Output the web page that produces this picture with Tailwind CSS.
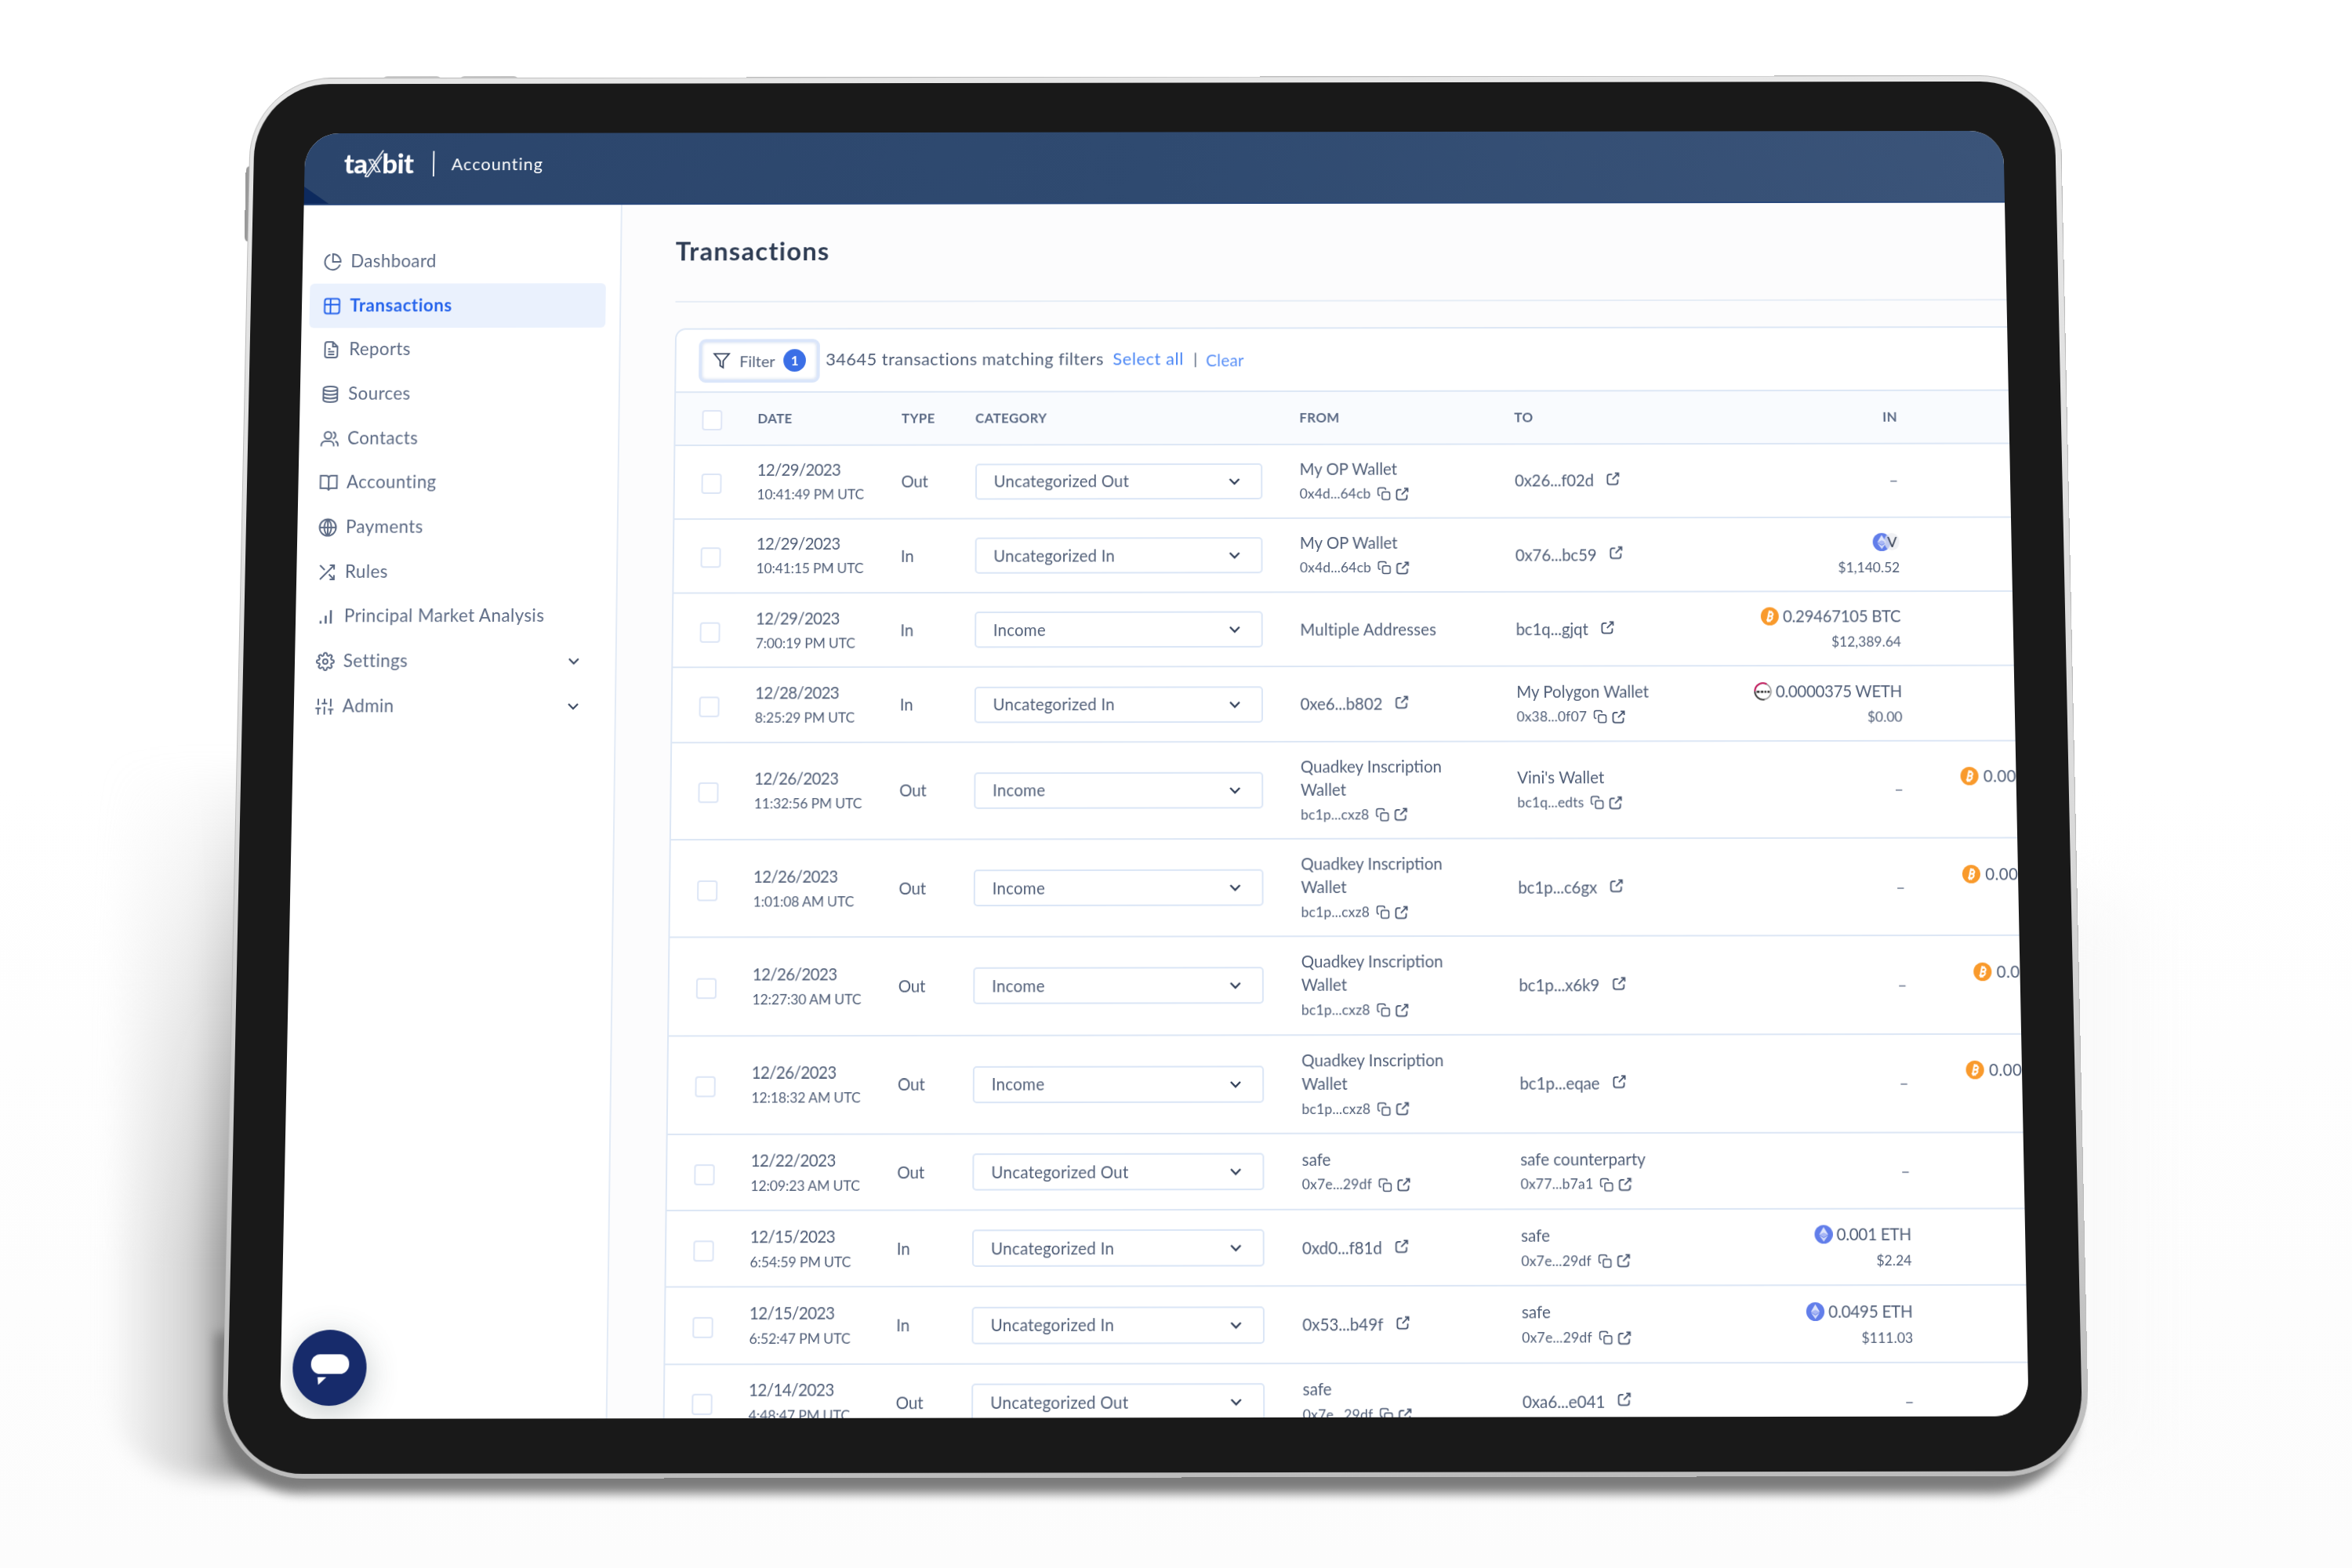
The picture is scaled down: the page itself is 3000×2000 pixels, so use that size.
<!DOCTYPE html>
<html lang="en">

<head>
    <meta charset="UTF-8">
    <meta name="viewport" content="width=device-width, initial-scale=1.0">
    <title>Taxbit Accounting</title>
    <script src="https://cdn.jsdelivr.net/npm/@tailwindcss/browser@4"></script>
</head>

<body class="bg-white">
    <!-- Icons -->
    <svg class="hidden">
        <symbol id="i-pie" viewBox="0 0 24 24"><path d="M8.5 2.8A10 10 0 1 0 21.2 15.5M12 2a10 10 0 0 1 10 10H12z" /></symbol>
        <symbol id="i-table" viewBox="0 0 24 24"><rect x="2.5" y="2.5" width="19" height="19" rx="3" /><path d="M2.5 10h19M10 2.5v19" /></symbol>
        <symbol id="i-file" viewBox="0 0 24 24"><path d="M14 2H7a3 3 0 0 0-3 3v14a3 3 0 0 0 3 3h10a3 3 0 0 0 3-3V8zM14 2v6h6M8 11h3M8 14.5h8M8 18h8" /></symbol>
        <symbol id="i-db" viewBox="0 0 24 24"><ellipse cx="12" cy="5" rx="9" ry="3" /><path d="M3 5v14c0 1.7 4 3 9 3s9-1.3 9-3V5M3 9.7c0 1.7 4 3 9 3s9-1.3 9-3M3 14.4c0 1.7 4 3 9 3s9-1.3 9-3" /></symbol>
        <symbol id="i-users" viewBox="0 0 24 24"><circle cx="10" cy="7.5" r="4.5" /><path d="M1.5 21.5V20a5 5 0 0 1 5-5h6a5 5 0 0 1 5 5v1.5M16.5 3.2a4.5 4.5 0 0 1 0 8.6M19.5 15.3a4.5 4.5 0 0 1 3.3 4.7v1.5" /></symbol>
        <symbol id="i-book" viewBox="0 0 24 24"><path d="M12 6a3.5 3.5 0 0 0-3.5-3h-7v16H9a3 3 0 0 1 3 3 3 3 0 0 1 3-3h7.5V3h-7A3.5 3.5 0 0 0 12 6zM12 6v15" /></symbol>
        <symbol id="i-globe" viewBox="0 0 24 24"><circle cx="12" cy="12" r="10.5" /><path d="M1.5 12h21M12 1.5c-6 5.5-6 15.5 0 21M12 1.5c6 5.5 6 15.5 0 21M12 1.5v21" /></symbol>
        <symbol id="i-shuffle" viewBox="0 0 24 24"><path d="M15.5 3H21v5.5M3 21 21 3M21 15.5V21h-5.5M14.5 14.5 21 21M3 3l6 6" /></symbol>
        <symbol id="i-bars" viewBox="0 0 24 24"><path d="M5 17.5V21M11.5 11v10M18 4v17" stroke-width="2.6" /></symbol>
        <symbol id="i-gear" viewBox="0 0 24 24"><circle cx="12" cy="12" r="3" /><path d="M19.4 15a1.65 1.65 0 0 0 .33 1.82l.06.06a2 2 0 0 1-2.83 2.83l-.06-.06a1.65 1.65 0 0 0-2.8 1.17V21a2 2 0 0 1-4 0v-.09a1.65 1.65 0 0 0-2.9-1.08l-.06.06a2 2 0 0 1-2.83-2.83l.06-.06A1.65 1.65 0 0 0 3.2 14H3a2 2 0 0 1 0-4h.09a1.65 1.65 0 0 0 1.18-2.9l-.06-.06a2 2 0 0 1 2.83-2.83l.06.06A1.65 1.65 0 0 0 10 3.2V3a2 2 0 0 1 4 0v.09a1.65 1.65 0 0 0 2.9 1.18l.06-.06a2 2 0 0 1 2.83 2.83l-.06.06A1.65 1.65 0 0 0 20.8 10H21a2 2 0 0 1 0 4h-.09a1.65 1.65 0 0 0-1.51 1z" /></symbol>
        <symbol id="i-sliders" viewBox="0 0 24 24"><path d="M4 22v-8M4 10V2M12 22V12M12 8V2M20 22v-6M20 12V2M.5 14h7M8.5 8h7M16.5 15.5h7" /></symbol>
        <symbol id="i-down" viewBox="0 0 24 24"><path d="m6 9 6 6 6-6" /></symbol>
        <symbol id="i-filter" viewBox="0 0 24 24"><path d="M22 3H2l8 9.5V19l4 2.5v-9z" /></symbol>
        <symbol id="i-copy" viewBox="0 0 24 24"><rect x="9" y="9" width="13" height="13" rx="3" /><path d="M5.5 15H5a3 3 0 0 1-3-3V5a3 3 0 0 1 3-3h7a3 3 0 0 1 3 3v.5" /></symbol>
        <symbol id="i-ext" viewBox="0 0 24 24"><path d="M20.5 13.5V18a4 4 0 0 1-4 4H6a4 4 0 0 1-4-4V8a4 4 0 0 1 4-4h4.5M15.5 2H22v6.5M22 2 11 13" /></symbol>
        <symbol id="i-btc" viewBox="0 0 24 24"><circle cx="12" cy="12" r="12" fill="#f99a2c" /><path d="M9 17.5 11.2 7h2.6c3.3 0 3 4.6-.6 4.9h-2.8M13.2 11.9c3.4.3 2.4 5.2-1.6 5.1L7.5 17M12 4.5 11.5 7M14.5 5 14 7.3M9.8 17l-.5 2.5M12.2 17l-.5 2.5" fill="none" stroke="#fff" stroke-width="2.2" /></symbol>
        <symbol id="i-eth" viewBox="0 0 24 24"><circle cx="12" cy="12" r="12" fill="#627eea" /><path d="m12 2.5-5.800 9.700L12 15.5l5.8-3.3z" fill="#fff" fill-opacity=".8" /><path d="m6.200 13.400 5.800 8.100 5.800-8.100L12 16.700z" fill="#fff" fill-opacity=".7" /><path d="m12 9.700-5.800 2.500L12 15.500l5.800-3.300z" fill="#a9b7f5" /></symbol>
        <symbol id="i-weth" viewBox="0 0 24 24"><circle cx="12" cy="12" r="10.8" fill="#fff" stroke="#999" stroke-width="1.6" /><path d="M17 2.400A10.800 10.800 0 0 0 1.200 12" fill="none" stroke="#c2185b" stroke-width="2.2" /><path d="M1.200 12A10.800 10.800 0 0 0 14 22.600" fill="none" stroke="#333" stroke-width="2" /><path d="M3.500 12.500h4M9 12.500h3.500M14 12.500h2.500M18 12.500h3" fill="none" stroke="#222" stroke-width="2.6" /></symbol>
    </svg>

    <div class="relative h-[2000px] w-[3000px] overflow-hidden bg-linear-to-b from-white from-50% to-[#fcfcfc] font-['Lato','Open_Sans',sans-serif]">
        <!-- Shadows on the table -->
        <div class="absolute left-[135px] top-[960px] h-[925px] w-[250px] blur-[13px]">
            <div class="h-full w-full rounded-bl-[120px] bg-linear-to-r from-transparent via-[#d2d2d2] via-45% to-[#858585] to-70% [mask-image:linear-gradient(to_bottom,transparent,#000_70%)]"></div>
        </div>
        <div class="absolute left-[2560px] top-[1150px] h-[700px] w-[160px] bg-[#f9f9f9] blur-[40px]"></div>
        <div class="absolute left-[275px] top-[1700px] h-[205px] w-[2375px] rounded-b-[110px] bg-[#7c7c7c] blur-[7px]"></div>

        <!-- Tablet, tilted backwards -->
        <div class="absolute left-0 top-0 h-[1617px] w-[2200px] origin-top-left [transform:matrix3d(.98445,-.0015,0,0,-.026571,.981409,0,-.000018047,0,0,1,0,389.405,170.15,0,1)]">
            <!-- Buttons -->
            <div class="absolute left-[99px] top-[-74px] h-4 w-[76px] rounded-md bg-[#c4c4c4]"></div>
            <div class="absolute left-[199px] top-[-74px] h-4 w-[76px] rounded-md bg-[#c4c4c4]"></div>
            <div class="absolute left-[-76px] top-[42px] h-[98px] w-4 rounded-md bg-[#9a9a9a]"></div>
            <!-- Body and bezel -->
            <div class="absolute bottom-[-73px] left-[-72px] right-[-75px] top-[-72px] rounded-[104px] border border-[#bdbdbd] bg-linear-to-b from-[#e6e6e6] via-[#dcdcdc] to-[#bcbcbc]"></div>
            <div class="absolute bottom-[-67px] left-[-66px] right-[-67px] top-[-64px] rounded-[96px] bg-[#191919]"></div>

            <!-- Screen -->
            <div class="relative flex h-full flex-col overflow-hidden rounded-[44px] bg-[#fcfcfd] text-[#526079]">
                <header class="relative flex h-[92.5px] shrink-0 items-center border-b-2 border-[#28477a] bg-linear-to-r from-[#2b456c] via-[#2f4a70] to-[#3b5479] pb-[11px] pl-[51px] text-white">
                    <svg class="absolute bottom-0 left-0 h-[22px] w-8" viewBox="0 0 32 22"><path d="M0 0 32 22H0z" fill="#0d2a5e" /></svg>
                    <div class="flex w-[91px] text-[35px] font-black leading-none tracking-[-.5px]">
                        <span>ta</span>
                        <svg class="mx-[-3px] h-[37px] w-[25px] shrink-0" viewBox="0 0 24 36" fill="none" stroke="#fff" stroke-width="1.5"><path d="M5 13h5l9 15h-5zM0 34 23 1M3.5 34.5 21 9M0 34h3.5" /></svg>
                        <span>bit</span>
                    </div>
                    <div class="ml-[24px] h-[33px] w-0.5 bg-white/90"></div>
                    <div class="ml-[22px] text-[22px] leading-none tracking-[1px]">Accounting</div>
                </header>

                <div class="flex min-h-0 flex-1">
                    <!-- Sidebar -->
                    <aside class="relative w-[412px] shrink-0 border-r-2 border-[#e3ebf6] bg-white pl-[10px] pr-[18px] pt-[45px]">
                        <nav id="nav"></nav>
                        <!-- Chat bubble -->
                        <div class="absolute bottom-[16px] left-[15px] flex size-[93px] items-center justify-center rounded-full bg-[#172b6b] shadow-[0_10px_40px_rgba(60,80,80,.3)]">
                            <svg class="mt-1 h-[38px] w-[48px]" viewBox="0 0 48 38" fill="#fff"><rect y="0" width="48" height="24" rx="11.5" /><path d="M8.5 28h11L9.5 37.5z" /></svg>
                        </div>
                    </aside>

                    <!-- Main Content -->
                    <main class="min-w-0 flex-1 overflow-hidden pl-[69.5px]">
                        <div class="flex h-[126.5px] items-center border-b-2 border-[#e6edf6] pb-1">
                            <h1 class="text-[33px] font-bold leading-none tracking-[1.3px] text-[#2f3d54]">Transactions</h1>
                        </div>

                        <div class="mt-[33px] h-[1500px] w-[1900px] rounded-tl-[14px] border-2 border-[#dde7f5] bg-white">
                            <!-- Filter bar -->
                            <div class="flex h-[81px] items-center border-b-2 border-[#dde7f5] pl-[29px]">
                                <button class="flex h-[56px] w-[156px] items-center rounded-[9px] border-4 border-[#dbe6fa] bg-white pl-[14px] text-[20px] shadow-[inset_0_0_4px_#c9d6ec]">
                                    <svg class="size-[23px] fill-none stroke-[#3c4a63] stroke-2"><use href="#i-filter" /></svg>
                                    <span class="ml-[12px]">Filter</span>
                                    <span class="ml-[11px] flex size-[29px] items-center justify-center rounded-full bg-[#3b6fe6] text-[17px] font-bold text-white">1</span>
                                </button>
                                <span class="ml-[8px] w-[370px] whitespace-nowrap pb-1 text-[22px] tracking-[.48px]">34645 transactions matching filters</span>
                                <span class="w-[104px] whitespace-nowrap pb-1 text-[22px] tracking-[.6px] text-[#4a86f5]">Select all</span>
                                <span class="w-[16px] pb-1 text-[20px] leading-none">|</span>
                                <span class="text-[21px] tracking-[.2px] text-[#5a90f7]">Clear</span>
                            </div>
                            <!-- Table head -->
                            <div class="grid h-[67.5px] grid-cols-[106px_185.3px_95px_417px_276.4px_300px_193px] items-center border-b-2 border-[#dde7f5] bg-[#f9fbfe] text-[17px] font-bold tracking-[.4px] text-[#5a6984]">
                                <div class="ml-[34px] mt-1 size-[26px] rounded-[4px] border-2 border-[#dfe6f6] bg-white"></div>
                                <div>DATE</div>
                                <div>TYPE</div>
                                <div>CATEGORY</div>
                                <div>FROM</div>
                                <div>TO</div>
                                <div class="text-right">IN</div>
                            </div>
                            <div id="rows"></div>
                        </div>
                    </main>
                </div>
            </div>
        </div>
    </div>

    <script>
        const menu = [
            ["i-pie", "Dashboard"],
            ["i-table", "Transactions"],
            ["i-file", "Reports"],
            ["i-db", "Sources"],
            ["i-users", "Contacts"],
            ["i-book", "Accounting"],
            ["i-globe", "Payments"],
            ["i-shuffle", "Rules"],
            ["i-bars", "Principal Market Analysis"],
            ["i-gear", "Settings"],
            ["i-sliders", "Admin"],
        ];

        document.getElementById("nav").innerHTML = menu.map(([icon, label]) => {
            const active = label == "Transactions";
            const more = label == "Settings" || label == "Admin";
            return `
                <a class="flex h-[56.7px] items-center rounded-[6px] pl-[17px] text-[22.5px] ${active ? "bg-[#eaf1fd] font-bold text-[#2563eb] tracking-[.55px]" : "text-[#5d6b85] tracking-[.4px]"}">
                    <svg class="size-6 fill-none stroke-current stroke-2"><use href="#${icon}" /></svg>
                    <span class="ml-[11px] pb-0.5">${label}</span>
                    ${more ? `<svg class="ml-auto mr-[23px] size-6 fill-none stroke-[#3c4a63] stroke-[2.2]"><use href="#i-down" /></svg>` : ""}
                </a>`;
        }).join("");

        // date, time, type, category, from, to, in, out
        // from / to: one entry is a bare address, more are name lines followed by the address
        const rows = [
            ["12/29/2023", "10:41:49 PM UTC", "Out", "Uncategorized Out", ["My OP Wallet", "0x4d...64cb"], ["0x26...f02d"], null],
            ["12/29/2023", "10:41:15 PM UTC", "In", "Uncategorized In", ["My OP Wallet", "0x4d...64cb"], ["0x76...bc59"], ["pair", "", "$1,140.52"]],
            ["12/29/2023", "7:00:19 PM UTC", "In", "Income", ["Multiple Addresses"], ["bc1q...gjqt"], ["i-btc", "0.29467105 BTC", "$12,389.64"]],
            ["12/28/2023", "8:25:29 PM UTC", "In", "Uncategorized In", ["0xe6...b802"], ["My Polygon Wallet", "0x38...0f07"], ["i-weth", "0.0000375 WETH", "$0.00"]],
            ["12/26/2023", "11:32:56 PM UTC", "Out", "Income", ["Quadkey Inscription", "Wallet", "bc1p...cxz8"], ["Vini's Wallet", "bc1q...edts"], null, "0.000"],
            ["12/26/2023", "1:01:08 AM UTC", "Out", "Income", ["Quadkey Inscription", "Wallet", "bc1p...cxz8"], ["bc1p...c6gx"], null, "0.000"],
            ["12/26/2023", "12:27:30 AM UTC", "Out", "Income", ["Quadkey Inscription", "Wallet", "bc1p...cxz8"], ["bc1p...x6k9"], null, "0.00"],
            ["12/26/2023", "12:18:32 AM UTC", "Out", "Income", ["Quadkey Inscription", "Wallet", "bc1p...cxz8"], ["bc1p...eqae"], null, "0.000"],
            ["12/22/2023", "12:09:23 AM UTC", "Out", "Uncategorized Out", ["safe", "0x7e...29df"], ["safe counterparty", "0x77...b7a1"], null],
            ["12/15/2023", "6:54:59 PM UTC", "In", "Uncategorized In", ["0xd0...f81d"], ["safe", "0x7e...29df"], ["i-eth", "0.001 ETH", "$2.24"]],
            ["12/15/2023", "6:52:47 PM UTC", "In", "Uncategorized In", ["0x53...b49f"], ["safe", "0x7e...29df"], ["i-eth", "0.0495 ETH", "$111.03"]],
            ["12/14/2023", "4:48:47 PM UTC", "Out", "Uncategorized Out", ["safe", "0x7e...29df"], ["0xa6...e041"], null],
        ];

        const ext = `<svg class="size-[17px] fill-none stroke-[#47556f] stroke-[2.5]"><use href="#i-ext" /></svg>`;
        const copy = `<svg class="size-[18px] fill-none stroke-[#47556f] stroke-2"><use href="#i-copy" /></svg>`;

        function party(lines) {
            if (lines.length == 1) {
                if (lines[0] == "Multiple Addresses") return `<div class="tracking-[.2px]">${lines[0]}</div>`;
                return `<div class="flex items-center gap-[16px] tracking-[-.1px]">${lines[0]}<span class="-mt-1">${ext}</span></div>`;
            }
            const names = lines.slice(0, -1).map(l => `<div class="leading-[29px]">${l}</div>`).join("");
            return `<div class="pt-1">${names}<div class="flex h-[34px] items-center gap-[6px] text-[17.5px]"><span class="mr-[2px] tracking-[.15px]">${lines[lines.length - 1]}</span>${copy}${ext}</div></div>`;
        }

        function amount(v) {
            if (!v) return `<div class="text-right font-bold text-[#8a94a6]">–</div>`;
            const [icon, text, usd] = v;
            const top = icon == "pair"
                ? `<svg class="size-[23px]"><use href="#i-eth" /></svg><span class="-ml-[8px] flex h-[22px] w-[19px] items-center justify-center rounded-full bg-[#e9ebef]/70 text-[18px] text-[#2f3a4e]">V</span>`
                : `<svg class="mr-[5px] size-[23px]"><use href="#${icon}" /></svg>${text}`;
            return `<div class="pt-0.5 text-right"><div class="flex h-[31px] items-center justify-end tracking-[-.3px]">${top}</div><div class="h-[33px] pt-1 text-[17.5px]">${usd}</div></div>`;
        }

        document.getElementById("rows").innerHTML = rows.map(([date, time, type, category, from, to, inn, out]) => `
            <div class="grid ${from.length == 3 ? "h-[122.3px]" : "h-[94.3px]"} grid-cols-[106px_185.3px_95px_417px_276.4px_300px_193px_73px_200px] items-center border-b-2 border-[#dde7f5] text-[20.5px] whitespace-nowrap">
                <div class="ml-[34px] mt-[5px] size-[26px] rounded-[4px] border-2 border-[#dde6f6]"></div>
                <div class="pt-px"><div class="leading-[31px] tracking-[-.65px]">${date}</div><div class="text-[17.5px] leading-[31px] tracking-[-.15px]">${time}</div></div>
                <div class="tracking-[-.2px]">${type}</div>
                <div class="flex h-[46px] w-[369px] items-center justify-between rounded-[5px] border-2 border-[#dbe6f6] pl-[22px] pr-[22px]">
                    <span class="tracking-[.2px]">${category}</span>
                    <svg class="size-6 fill-none stroke-[#33415a] stroke-[2.3]"><use href="#i-down" /></svg>
                </div>
                ${party(from)}
                ${party(to)}
                ${amount(inn)}
                <div></div>
                ${out ? `<div class="mb-8 flex items-center gap-[6px] tracking-[.4px] ${out == "0.00" ? "pl-[12px]" : ""}"><svg class="size-[23px]"><use href="#i-btc" /></svg>${out}</div>` : "<div></div>"}
            </div>`).join("");
    </script>
</body>

</html>
